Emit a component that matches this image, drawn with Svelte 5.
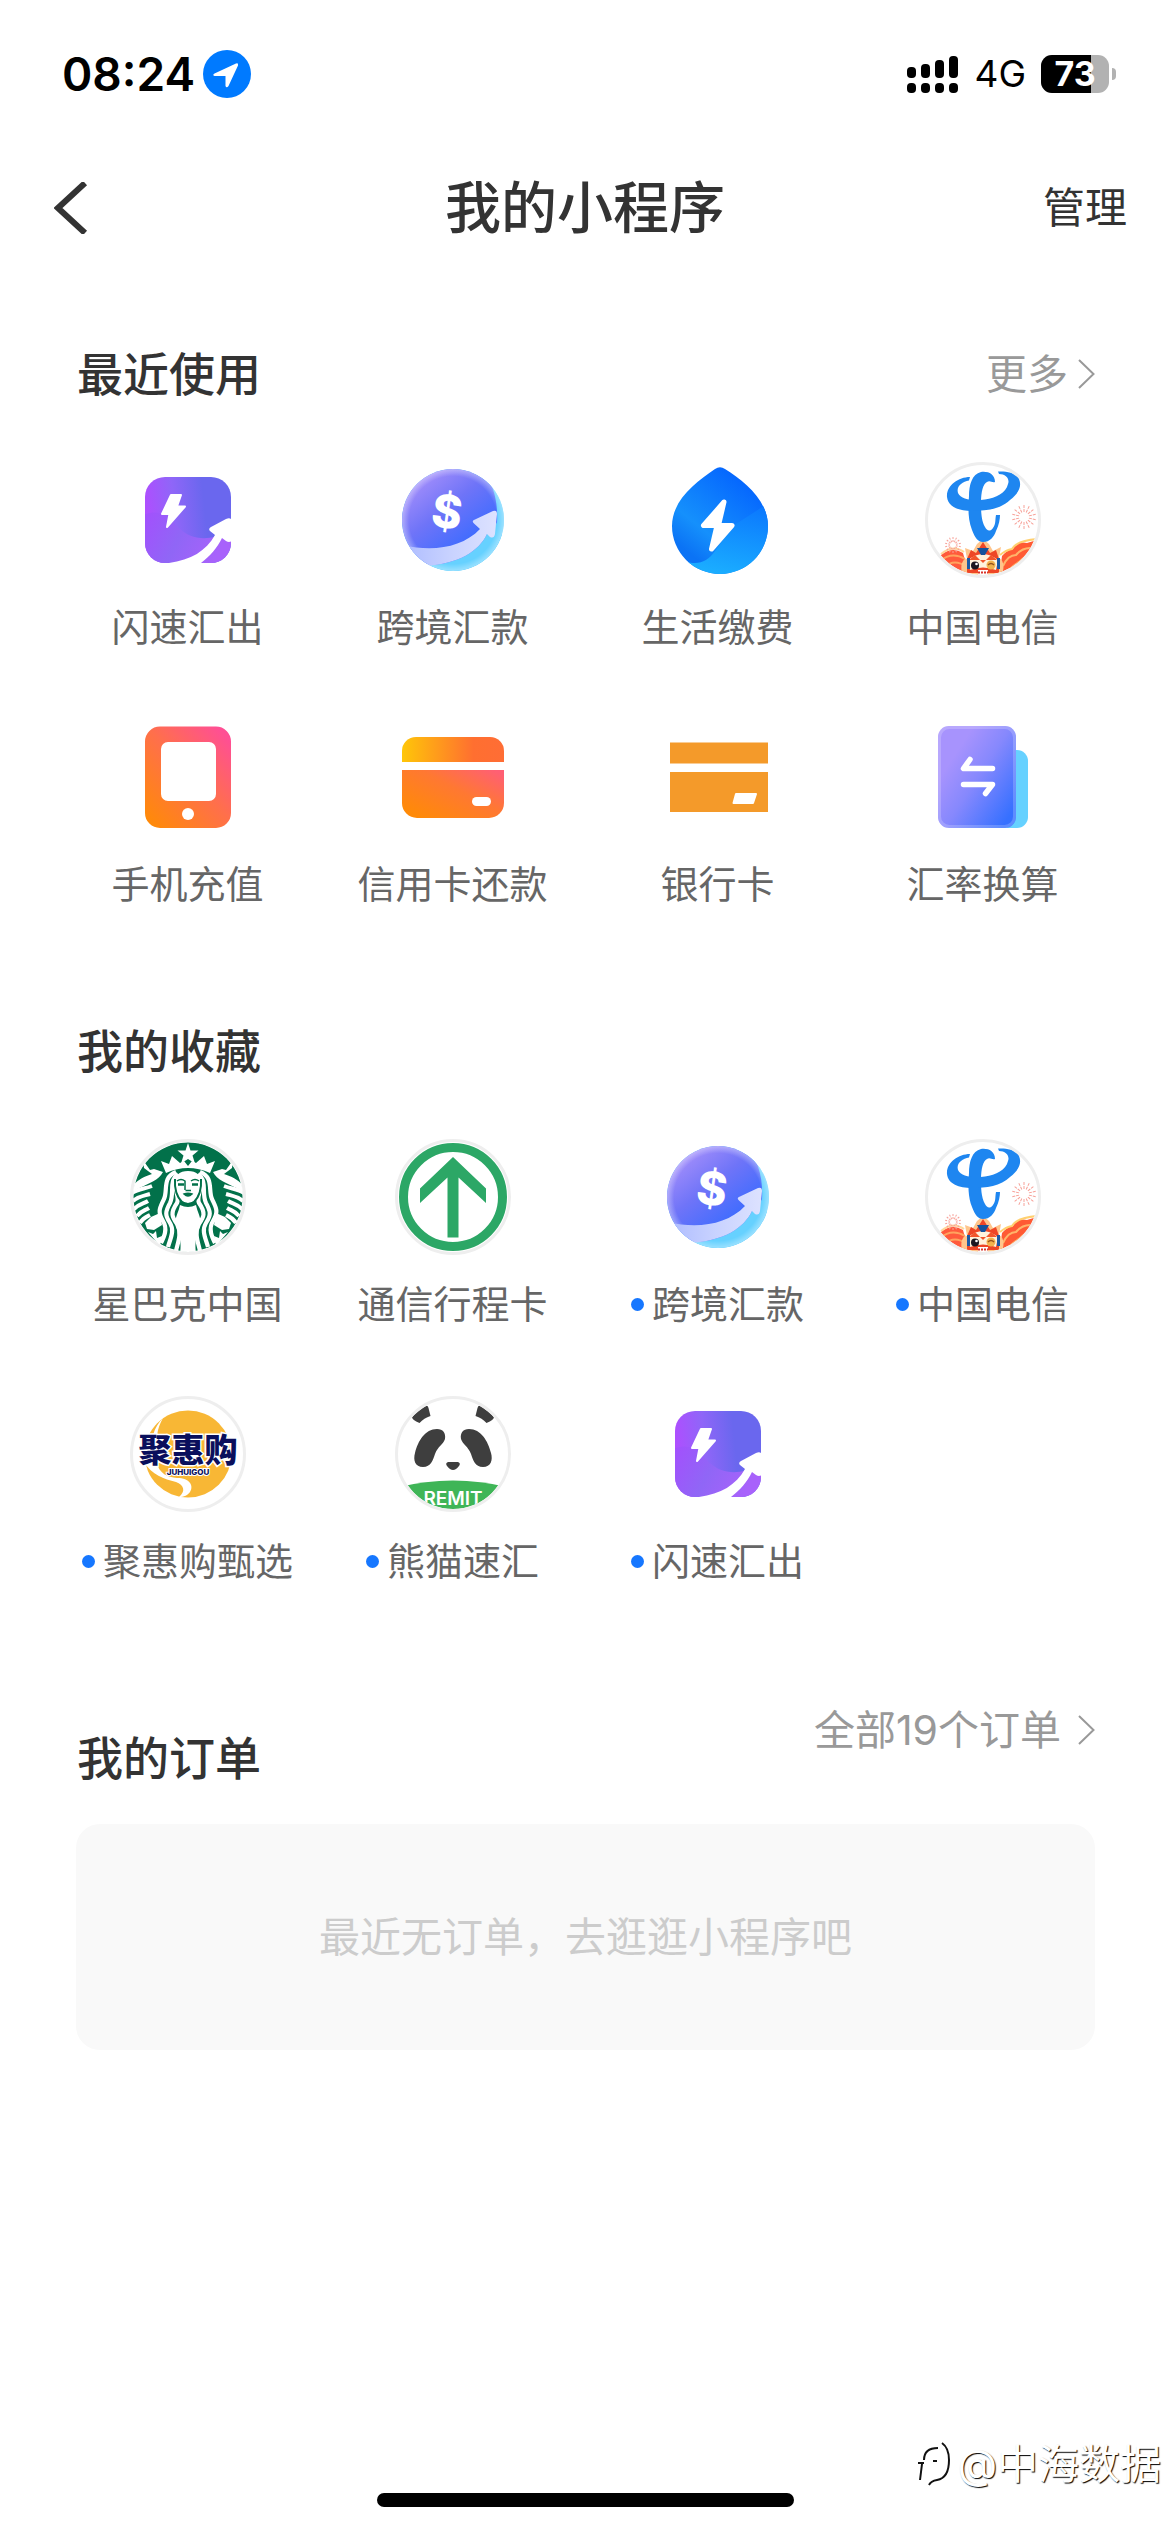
<script>
	const recent = [
		{ name: '闪速汇出', icon: 'flash' },
		{ name: '跨境汇款', icon: 'remit' },
		{ name: '生活缴费', icon: 'life' },
		{ name: '中国电信', icon: 'telecom' },
		{ name: '手机充值', icon: 'phone' },
		{ name: '信用卡还款', icon: 'credit' },
		{ name: '银行卡', icon: 'bank' },
		{ name: '汇率换算', icon: 'rate' }
	];

	const favorites = [
		{ name: '星巴克中国', icon: 'starbucks' },
		{ name: '通信行程卡', icon: 'travel' },
		{ name: '跨境汇款', icon: 'remit', dot: true },
		{ name: '中国电信', icon: 'telecom', dot: true },
		{ name: '聚惠购甄选', icon: 'juhui', dot: true },
		{ name: '熊猫速汇', icon: 'panda', dot: true },
		{ name: '闪速汇出', icon: 'flash', dot: true }
	];

	const orderCount = 19;
	const battery = 73;
	const signal = [11, 14, 18, 22];
	const rays = Array.from({ length: 14 }, (_, i) => (i * 360) / 14);
</script>

<!-- gradients shared by the icons -->
<svg class="defs" aria-hidden="true">
	<defs>
		<linearGradient id="g-flash" x1="0" y1="0.5" x2="1" y2="0.4">
			<stop offset="0" stop-color="#b04dff" />
			<stop offset="0.35" stop-color="#8f66f8" />
			<stop offset="0.7" stop-color="#6a67ee" />
			<stop offset="1" stop-color="#6a67ee" />
		</linearGradient>
		<linearGradient id="g-flash-low" x1="0" y1="0" x2="1" y2="0.3">
			<stop offset="0" stop-color="#a350fd" />
			<stop offset="0.5" stop-color="#9066f6" />
			<stop offset="1" stop-color="#a862fb" />
		</linearGradient>
		<linearGradient id="g-remit" x1="0.15" y1="0.15" x2="0.7" y2="0.85">
			<stop offset="0" stop-color="#ab92fb" />
			<stop offset="0.5" stop-color="#6f74f8" />
			<stop offset="1" stop-color="#3a6bff" />
		</linearGradient>
		<linearGradient id="g-remit-arrow" x1="0" y1="0" x2="1" y2="0">
			<stop offset="0" stop-color="#aebcff" />
			<stop offset="0.5" stop-color="#c8d2ff" />
			<stop offset="1" stop-color="#dde2ff" />
		</linearGradient>
		<linearGradient id="g-drop" x1="0.7" y1="0.1" x2="0.2" y2="0.8">
			<stop offset="0" stop-color="#0566fe" />
			<stop offset="0.7" stop-color="#1590fc" />
			<stop offset="1" stop-color="#0b73f5" />
		</linearGradient>
		<linearGradient id="g-drop-low" x1="0.7" y1="0" x2="0.4" y2="1">
			<stop offset="0" stop-color="#0b78fe" />
			<stop offset="1" stop-color="#1cb2ff" />
		</linearGradient>
		<linearGradient id="g-phone" x1="0.1" y1="1" x2="0.95" y2="0.1">
			<stop offset="0" stop-color="#ff8a08" />
			<stop offset="0.55" stop-color="#ff6f4c" />
			<stop offset="1" stop-color="#ff4f94" />
		</linearGradient>
		<linearGradient id="g-credit-top" x1="0" y1="0" x2="1" y2="0">
			<stop offset="0" stop-color="#ffc608" />
			<stop offset="0.7" stop-color="#ff6f30" />
			<stop offset="1" stop-color="#ff6d35" />
		</linearGradient>
		<linearGradient id="g-credit" x1="0.1" y1="0.9" x2="1" y2="0.1">
			<stop offset="0" stop-color="#ff8a08" />
			<stop offset="0.55" stop-color="#ff7832" />
			<stop offset="1" stop-color="#ff5f74" />
		</linearGradient>
		<linearGradient id="g-rate" x1="0.2" y1="0.3" x2="0.9" y2="0.9">
			<stop offset="0" stop-color="#a793fd" />
			<stop offset="0.4" stop-color="#8688fd" />
			<stop offset="1" stop-color="#3670ff" />
		</linearGradient>
		<radialGradient id="g-rim">
			<stop offset="0.86" stop-color="#fff" stop-opacity="0" />
			<stop offset="1" stop-color="#fff" stop-opacity="0.35" />
		</radialGradient>
		<clipPath id="c-square"><rect x="15" y="15" width="86" height="86" rx="20" /></clipPath>
		<clipPath id="c-ball"><circle cx="58" cy="58" r="51" /></clipPath>
		<clipPath id="c-drop"><path d="M55 7Q60 3.500 65 7C84 19 108 38 108 64A48 48 0 0 1 12 64C12 38 36 20 55 7Z" /></clipPath>
		<clipPath id="c-round"><circle cx="58" cy="58" r="55" /></clipPath>
	</defs>
</svg>

{#snippet chevron()}
	<svg class="chevron" viewBox="0 0 17 30" aria-hidden="true">
		<path d="M1 1l14.500 14L1 29" fill="none" stroke="currentColor" stroke-width="2" />
	</svg>
{/snippet}

{#snippet mermaidSide()}
	<path d="M2 48C8 40 14 38 22 35L14 29l-1 -8l7 10l4 -1l9 3C29 41 20 44 3 52Z" fill="#fff" />
	<g fill="none" stroke="#fff" stroke-width="4">
		<path d="M2 54C8 50 14 50 22 47" />
		<path d="M3 62C9 57 13 57 20 55" />
		<path d="M4 70C9 65 13 65 18 62" />
		<path d="M7 77C11 72 14 72 19 69" />
		<path d="M10 84C13 79 16 78 20 76" />
	</g>
	<path d="M15 84l6 -6l9 -4l2 12l-8 5l-7 -1Z" fill="#fff" />
	<path d="M18 93l5 2l3 -3l1 7l5 -2l-2 10Z" fill="#fff" />
	<g fill="none" stroke="#fff" stroke-width="4.200">
		<path d="M46 33C32 38 38 52 34 60C30 69 27 72 33 82C38 90 34 98 31 104" />
		<path d="M48 35C38 43 45 54 40 64C35 73 35 76 40 84C45 92 40 100 38 108" />
		<path d="M47 42C43 50 50 58 47 64C40 74 42 78 47 85C52 94 48 103 46 112" />
	</g>
{/snippet}

{#snippet icon(name)}
	<svg class="icon" viewBox="0 0 116 116" aria-hidden="true">
		{#if name === 'flash'}
			<g clip-path="url(#c-square)">
				<rect x="15" y="15" width="86" height="86" fill="url(#g-flash)" />
				<path d="M15 52C34 46 40 58 50 67C61 77 76 80 101 70V101H15Z" fill="url(#g-flash-low)" />
				<path d="M39 101C61 98 76 89 85 73L80 69Q78 66.500 81 65L96 57Q101 55 102 59V79Q99 81 96 79L92 76C87 86 80 94 71 101Z" fill="#fff" />
			</g>
			<path d="M41 33H51L47 44.500H55L37 65L39.500 52H32Z" fill="#fff" stroke="#fff" stroke-width="2" stroke-linejoin="round" />
		{:else if name === 'remit'}
			<g clip-path="url(#c-ball)">
				<rect x="7" y="7" width="102" height="102" fill="#66d1ff" />
				<path d="M0 0H80Q104 22 102 60Q84 100 40 103L0 100Z" fill="url(#g-remit)" />
				<path d="M30 104C64 102 84 89 92 72L104 60L116 116H30Z" fill="#66d1ff" />
				<circle cx="58" cy="58" r="51" fill="url(#g-rim)" />
				<path d="M8 83C37 90 67 86 85 67L79 61.500Q76 59 80 57.500L98 49Q102 47.500 102 52L100 72Q99 77 95 75L92 72C84 89 64 102 30 104Z" fill="url(#g-remit-arrow)" />
			</g>
			<text x="52" y="66" class="dollar" transform="rotate(8 52 50)">$</text>
		{:else if name === 'life'}
			<g clip-path="url(#c-drop)">
				<rect x="10" y="4" width="100" height="110" fill="url(#g-drop)" />
				<path d="M12 92C30 105 45 104 55 89L76 62L110 40V116H10Z" fill="url(#g-drop-low)" />
			</g>
			<path d="M64 40L43.500 63.500H57L51.500 87L72 63.500H58.500Z" fill="#fff" stroke="#fff" stroke-width="5" stroke-linejoin="round" />
		{:else if name === 'telecom'}
			<circle cx="58" cy="58" r="56" fill="#fff" />
			<g clip-path="url(#c-round)">
				<path d="M16 93Q27 84 38 91L45 116H10Z" fill="#ff5a3c" />
				<path d="M15 99Q27 89 40 97M20 105Q29 96 42 105" fill="none" stroke="#ffa35e" stroke-width="2" />
				<path d="M16 92Q28 82 39 90" fill="none" stroke="#ffd79a" stroke-width="2" />
				<path d="M74 116L77 94Q82 88 88 87Q92 79 102 81L112 78V116Z" fill="#ff5a34" />
				<path d="M78 104Q83 93 91 93Q97 86 105 86M80 112Q88 103 94 100Q98 96 101 95" fill="none" stroke="#ffb46a" stroke-width="2" />
				<path d="M75 93Q81 88 87 87Q91 79 112 77" fill="none" stroke="#ffd070" stroke-width="2" />
				<path d="M38 116C34 103 38 96 42 97L40 86L48 89L52 82L58 77L64 82L68 89L76 85L74 96C79 98 80 106 76 116Z" fill="#ffc58c" />
				<path d="M42 111V97L46 88L51 91L58 80L65 91L71 88L74 97V111Z" fill="#ee4626" />
				<path d="M43 98Q58 86 73 98L71 108Q58 103 45 108Z" fill="#fff2dc" />
				<path d="M52 86H64L60 93H56Z" fill="#14529c" />
				<path d="M50 93L58 101L66 93L72 98H44Z" fill="#f2552b" />
				<path d="M42 96h3v11h-3ZM72 96h3v11h-3Z" fill="#1c5aa5" />
				<circle cx="50" cy="103.500" r="4" fill="#1b1620" />
				<circle cx="51.500" cy="102" r="1.300" fill="#fff" />
				<circle cx="66" cy="103" r="4.500" fill="#f3b24d" />
				<path d="M63 103Q66 100 69 103" fill="none" stroke="#99531d" stroke-width="1.500" />
				<path d="M53 108H63V113H53Z" fill="#fff" />
				<path d="M53 110.500H63" stroke="#d9342b" stroke-width="2" stroke-dasharray="2 1" />
				{#each rays as angle}
					<path d="M99 50V42" stroke="#f7a198" stroke-width="1" stroke-dasharray="3 1" transform="rotate({angle} 99 55)" />
					<path d="M28 80V75" stroke="#f7a198" stroke-width="1" stroke-dasharray="2 1" transform="rotate({angle} 28 83)" />
				{/each}
			</g>
			<g fill="#1e86f0">
				<path d="M70 20C70 12 63 9 56 10C47 12 44 23 44 34C43 46 43 58 47 68C50 76 53 80 58 80C65 80 69 75 71 69C74 63 75 57 75 53H71C70 58 71 62 68 66C65 70 62 69 60 65C56 58 56 48 56 40C56 30 58 22 62 20C65 18 67 21 70 20Z" />
				<path d="M45 15C33 15 21 24 22 35C23 45 34 49 47 49C61 49 76 47 85 38C94 31 97 24 94 17C91 10 80 9 73 9.500L74 12C81 12 85 17 83 22C81 31 71 36 60 37.500C49 39 36 38 33 31C31 24 37 20 44 18.500Z" />
			</g>
			<circle cx="58" cy="58" r="56.500" class="ring" />
		{:else if name === 'phone'}
			<path fill-rule="evenodd" d="M30 7.500H86A15 15 0 0 1 101 22.500V94A15 15 0 0 1 86 109H30A15 15 0 0 1 15 94V22.500A15 15 0 0 1 30 7.500ZM38 23A7 7 0 0 0 31 30V75A7 7 0 0 0 38 82H79A7 7 0 0 0 86 75V30A7 7 0 0 0 79 23Z" fill="url(#g-phone)" />
			<circle cx="58" cy="95" r="6" fill="#fff" />
		{:else if name === 'credit'}
			<path d="M7 43V32A14 14 0 0 1 21 18H95A14 14 0 0 1 109 32V43Z" fill="url(#g-credit-top)" />
			<path d="M7 51H109V84A15 15 0 0 1 94 99H22A15 15 0 0 1 7 84Z" fill="url(#g-credit)" />
			<rect x="77" y="78" width="19" height="9" rx="4.500" fill="#fff" />
		{:else if name === 'bank'}
			<path d="M10 23.500H108V44.500H10ZM10 53H108V93H10Z" fill="#f49a2a" />
			<path d="M76 75H96L93 84H73.500Z" fill="#fff" stroke="#fff" stroke-width="2" stroke-linejoin="round" />
		{:else if name === 'rate'}
			<rect x="60" y="31" width="43" height="78" rx="11" fill="#66d1ff" />
			<rect x="13" y="7" width="78" height="102" rx="11" fill="url(#g-rate)" />
			<rect x="14.500" y="8.500" width="75" height="99" rx="10" fill="none" stroke="#fff" stroke-width="3" opacity="0.2" />
			<path d="M45 40.500L38.500 49.500H67.500M38.500 65.500H67.500L60.500 74.500" fill="none" stroke="#fff" stroke-width="5.500" stroke-linecap="round" stroke-linejoin="round" />
		{:else if name === 'starbucks'}
			<circle cx="58" cy="58" r="56" fill="#fff" />
			<g clip-path="url(#c-round)">
				<circle cx="58" cy="58" r="54.500" fill="#02714a" />
				<path d="M58 4L60.500 11.500H68.500L62.500 16.500L65 24.500L58 20L51 24.500L53.500 16.500L47.500 11.500H55.500Z" fill="#fff" />
				<path d="M36 34L31 22L39 25L42 17L50 24L54 22L58 27L62 22L66 24L74 17L77 25L85 22L80 34Q58 24 36 34Z" fill="#fff" />
				{@render mermaidSide()}
				<g transform="translate(116 0) scale(-1 1)">{@render mermaidSide()}</g>
				<path d="M45 44Q45 32 58 32Q71 32 71 44Q71 58 64 62Q58 66 52 62Q45 58 45 44Z" fill="#fff" />
				<path d="M50 66Q58 70 66 66C68 76 73 80 69 90Q64 101 66 114H50Q52 101 47 90C43 80 48 76 50 66Z" fill="#fff" />
				<g fill="none" stroke="#02714a">
					<path d="M45 40Q44 55 52 63Q58 67 64 63Q72 55 71 40" stroke-width="2" />
					<path d="M47 42Q51 39 55 42V51M61 42Q65 39 69 42" stroke-width="1.500" />
					<path d="M48 45.500H54M62 45.500H68" stroke-width="2.500" />
					<path d="M55.500 51.500H61" stroke-width="1.500" />
					<path d="M54 55Q58 53.500 62 55Q58 59 54 55Z" stroke-width="1.500" fill="#02714a" />
				</g>
			</g>
			<circle cx="58" cy="58" r="56.500" class="ring" />
		{:else if name === 'travel'}
			<circle cx="58" cy="58" r="56.500" fill="#fff" class="ring" />
			<circle cx="58" cy="58" r="49.500" fill="none" stroke="#2ca766" stroke-width="9" />
			<path d="M58 18L91 49.500V64L63.500 38.500V98.500H52.500V38.500L25 64V49.500Z" fill="#2ca766" />
		{:else if name === 'juhui'}
			<circle cx="58" cy="58" r="56.500" fill="#fff" class="ring" />
			<circle cx="58" cy="58" r="43.500" fill="#f8b735" />
			<path d="M33 22C27 32 25 45 28 58L20 62C20 44 24 31 33 22Z" fill="#fff" />
			<path d="M14 66L26 66C30 78 37 81 47 82C60 82 64 90 60 96C58 99 54 101 49 101C56 95 54 89 46 86C34 83 22 79 14 66Z" fill="#fff" />
			<text x="58" y="66" class="juhui">聚惠购</text>
			<text x="58" y="79" class="juhui-latin">JUHUIGOU</text>
		{:else if name === 'panda'}
			<circle cx="58" cy="58" r="56" fill="#fff" />
			<g clip-path="url(#c-round)">
				{#each ['', 'translate(116 0) scale(-1 1)'] as flip}
					<g transform={flip} fill="#3e3e3e">
						<path d="M17 21Q22 13 30 10Q33 9 33.500 12L35.500 20Q29 22 24.500 27Q17 24 17 21Z" />
						<path d="M42 33C48 33 51 37 50 43C48 49 43 50 40 58C38 64 36 71 28 71C20 71 18 64 20 57C23 45 30 33 42 33Z" />
					</g>
				{/each}
				<path d="M53 66H63Q66 67 64 70Q58 78 52 70Q50 67 53 66Z" fill="#3e3e3e" />
				<path d="M0 92Q58 77 116 92V116H0Z" fill="#3fb557" />
				<text x="58" y="109" class="remit-word">REMIT</text>
			</g>
			<circle cx="58" cy="58" r="56.500" class="ring" />
		{/if}
	</svg>
{/snippet}

{#snippet grid(items)}
	<div class="grid">
		{#each items as item}
			<a class="app" href="#{item.icon}">
				{@render icon(item.icon)}
				<span class="app__label">
					{#if item.dot}<i class="app__dot"></i>{/if}
					{item.name}
				</span>
			</a>
		{/each}
	</div>
{/snippet}

<div class="page">
	<div class="status">
		<div class="status__side">
			<span class="status__time">08:24</span>
			<svg class="status__location" viewBox="0 0 48 48" aria-hidden="true">
				<circle cx="24" cy="24" r="24" fill="#007aff" />
				<path d="M11.500 23.500L33 13.500Q35.500 12.500 35 15.500L25.500 36Q23.500 38.500 22.500 36V26H11.500Q9 25 11.500 23.500Z" fill="#fff" />
			</svg>
		</div>
		<div class="status__side">
			<svg class="status__signal" viewBox="0 0 52 38" aria-hidden="true">
				{#each signal as height, i}
					<rect x={i * 14} y={23 - height} width="9" {height} rx="4" />
					<rect x={i * 14} y="28" width="9" height="10" rx="4" />
				{/each}
			</svg>
			<span class="status__net">4G</span>
			<div class="battery">
				<div class="battery__body">
					<div class="battery__fill" style="width: {battery}%"></div>
					<span class="battery__text">{battery}</span>
				</div>
				<div class="battery__tip"></div>
			</div>
		</div>
	</div>

	<header class="header">
		<button class="header__back" aria-label="返回">
			<svg viewBox="0 0 34 52" aria-hidden="true">
				<path d="M31 1L4 26L31 51" fill="none" stroke="#333" stroke-width="6" />
			</svg>
		</button>
		<h1 class="header__title">我的小程序</h1>
		<button class="header__manage">管理</button>
	</header>

	<main>
		<section class="section">
			<div class="section__head">
				<h2 class="section__title">最近使用</h2>
				<a class="section__more" href="#recent">更多{@render chevron()}</a>
			</div>
			{@render grid(recent)}
		</section>

		<section class="section">
			<div class="section__head">
				<h2 class="section__title">我的收藏</h2>
			</div>
			{@render grid(favorites)}
		</section>

		<section class="section">
			<div class="section__head section__head--orders">
				<h2 class="section__title">我的订单</h2>
				<a class="section__more" href="#orders">全部{orderCount}个订单{@render chevron()}</a>
			</div>
			<p class="empty">最近无订单，去逛逛小程序吧</p>
		</section>
	</main>

	<div class="home-bar"></div>

	<div class="watermark">
		<svg class="watermark__logo" viewBox="0 0 36 48" aria-hidden="true">
			<path d="M5 24L3 40M1 23H7M7 20Q7 8 21 8M16 21H20M25 3Q32 8 32 20Q32 38 20 40Q14 41 12 45" fill="none" stroke="#111" stroke-width="2" />
		</svg>
		<span>@中海数据</span>
	</div>
</div>

<style>
	:global(body) {
		margin: 0;
		background: #fff;
	}

	.defs {
		position: absolute;
		width: 0;
		height: 0;
	}

	.page {
		position: relative;
		display: flex;
		flex-direction: column;
		min-height: 100vh;
		color: #333;
		font-family: Inter, 'Noto Sans CJK SC', sans-serif;
	}

	a {
		color: inherit;
		text-decoration: none;
	}

	button {
		padding: 0;
		border: none;
		background: none;
		color: inherit;
		font: inherit;
	}

	h1,
	h2,
	p {
		margin: 0;
	}

	.status {
		display: flex;
		justify-content: space-between;
		align-items: center;
		height: 148px;
		padding: 0 54px 0 62px;
		color: #000;
	}

	.status__side {
		display: flex;
		align-items: center;
	}

	.status__time {
		font-weight: 600;
		font-size: 46px;
		line-height: 60px;
	}

	.status__location {
		width: 48px;
		height: 48px;
		margin-left: 8px;
	}

	.status__signal {
		width: 52px;
		height: 38px;
	}

	.status__net {
		margin: 0 15px;
		font-size: 37px;
		line-height: 48px;
	}

	.battery {
		display: flex;
		align-items: center;
		gap: 3px;
	}

	.battery__body {
		display: grid;
		grid-template-rows: 38px;
		align-items: center;
		width: 68px;
		border-radius: 11px;
		background: #b2b2b2;
	}

	.battery__fill,
	.battery__text {
		grid-area: 1 / 1;
	}

	.battery__fill {
		height: 38px;
		border-radius: 11px 0 0 11px;
		background: #000;
	}

	.battery__text {
		color: #fff;
		font-weight: 700;
		font-size: 34px;
		line-height: 38px;
		text-align: center;
	}

	.battery__tip {
		width: 4px;
		height: 12px;
		border-radius: 0 4px 4px 0;
		background: #b2b2b2;
	}

	.header {
		display: grid;
		grid-template-columns: 1fr auto 1fr;
		align-items: center;
		height: 120px;
		padding: 0 43px;
	}

	.header__back {
		justify-self: start;
		width: 45px;
		height: 52px;
		padding-left: 11px;
	}

	.header__back svg {
		display: block;
	}

	.header__title {
		font-weight: 500;
		font-size: 56px;
		line-height: 80px;
	}

	.header__manage {
		justify-self: end;
		font-size: 42px;
		line-height: 60px;
	}

	.section {
		padding-top: 112px;
	}

	.section:first-child {
		padding-top: 76px;
	}

	.section__head {
		display: flex;
		justify-content: space-between;
		align-items: center;
		padding: 0 75px 0 77px;
	}

	.section__head--orders {
		align-items: flex-end;
		min-height: 88px;
		padding-top: 2px;
	}

	.section__head--orders .section__more {
		align-self: flex-start;
		gap: 17px;
	}

	.section__title {
		font-weight: 500;
		font-size: 46px;
		line-height: 60px;
	}

	.section__more {
		display: flex;
		align-items: center;
		gap: 10px;
		color: #999;
		font-size: 41px;
		line-height: 60px;
	}

	.chevron {
		width: 17px;
		height: 30px;
	}

	.grid {
		display: grid;
		grid-template-columns: repeat(4, 1fr);
		row-gap: 67px;
		padding: 58px 55px 0;
	}

	.app {
		display: flex;
		flex-direction: column;
		align-items: center;
		gap: 24px;
	}

	.icon {
		width: 116px;
		height: 116px;
	}

	.app__label {
		display: flex;
		align-items: center;
		color: #666;
		font-size: 38px;
		line-height: 50px;
		white-space: nowrap;
	}

	.app__dot {
		width: 13px;
		height: 13px;
		margin-right: 8px;
		border-radius: 50%;
		background: #1677ff;
	}

	.ring {
		stroke: #eee;
		stroke-width: 3px;
	}

	.ring:not([fill]) {
		fill: none;
	}

	text {
		text-anchor: middle;
	}

	.dollar {
		fill: #fff;
		font-weight: 800;
		font-size: 46px;
	}

	.juhui {
		fill: #0a0f5c;
		stroke: #fff;
		stroke-width: 3px;
		paint-order: stroke;
		font-weight: 900;
		font-size: 33px;
	}

	.juhui-latin {
		fill: #0a0f5c;
		stroke: #fff;
		stroke-width: 2px;
		paint-order: stroke;
		font-weight: 800;
		font-size: 8px;
	}

	.remit-word {
		fill: #fff;
		font-weight: 600;
		font-size: 19px;
	}

	.empty {
		margin: 36px 75px 0 76px;
		padding: 83px 0;
		border-radius: 24px;
		background: #f9f9f9;
		color: #ccc;
		font-size: 41px;
		line-height: 60px;
		text-align: center;
	}

	.home-bar {
		width: 417px;
		height: 14px;
		margin: auto auto 25px;
		border-radius: 7px;
		background: #000;
	}

	.watermark {
		position: absolute;
		right: 9px;
		bottom: 38px;
		display: flex;
		align-items: center;
		gap: 4px;
		color: #fff;
		font-size: 41px;
		line-height: 60px;
		text-shadow: 1px 1px 1px #000;
	}

	.watermark__logo {
		width: 36px;
		height: 48px;
	}
</style>
